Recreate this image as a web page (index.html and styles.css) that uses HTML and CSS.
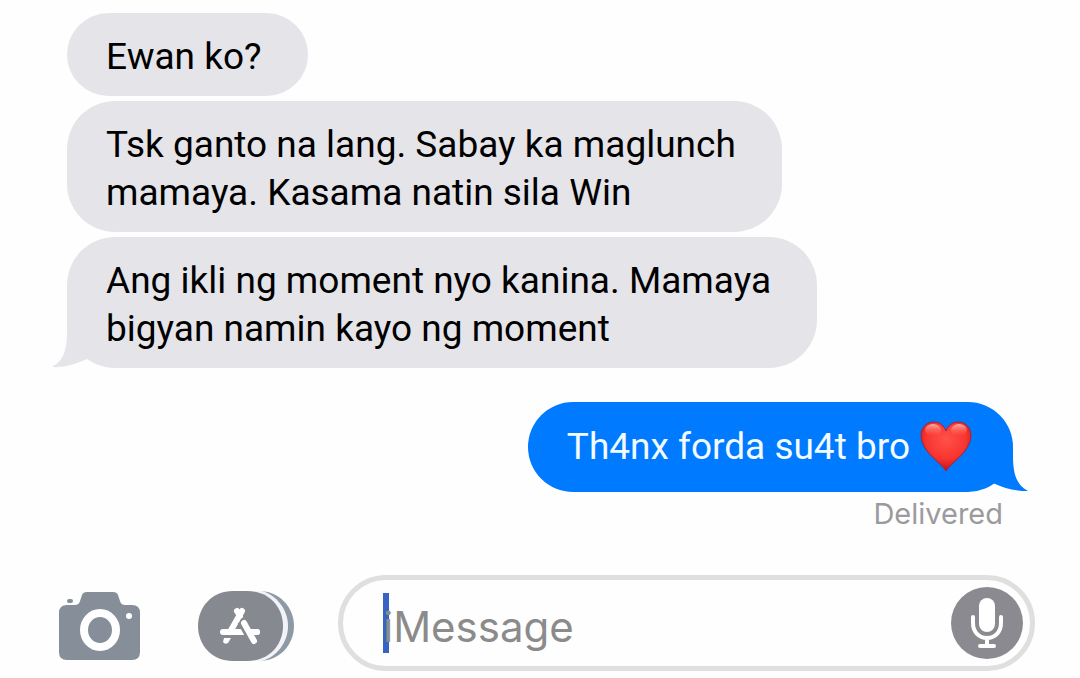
FILE: index.html
```
<!DOCTYPE html>
<html lang="fil">
<head>
  <meta charset="UTF-8" />
  <meta name="viewport" content="width=device-width, initial-scale=1.0" />
  <title>Messages</title>
  <link rel="stylesheet" href="styles.css">
</head>
<body>
  <main class="chat">
    <p class="bubble received">Ewan ko?</p>
    <p class="bubble received">Tsk ganto na lang. Sabay ka maglunch<br>mamaya. Kasama natin sila Win</p>
    <p class="bubble received">Ang ikli ng moment nyo kanina. Mamaya<br>bigyan namin kayo ng moment
      <svg class="tail tail-left" viewBox="0 0 62 56" aria-hidden="true"><path d="M15 8V20C15 39 11 49 0 55C12 56 23 52 35 47L36 30Z"/></svg>
    </p>
    <p class="bubble sent">Th4nx forda su4t bro
      <svg class="heart" viewBox="0 0 52 52" role="img" aria-label="red heart">
        <defs>
          <radialGradient id="heart-fill" cx="50%" cy="35%" r="62%">
            <stop offset="0" stop-color="#ff5148"/>
            <stop offset="0.65" stop-color="#f83530"/>
            <stop offset="1" stop-color="#c9141d"/>
          </radialGradient>
          <linearGradient id="heart-shine" x1="0" y1="0" x2="0" y2="1">
            <stop offset="0" stop-color="#ffb7b0" stop-opacity="0.9"/>
            <stop offset="1" stop-color="#ff6a62" stop-opacity="0"/>
          </linearGradient>
        </defs>
        <path d="M26 50C22 42 2 32 1 15C1 6 7 1 14 1C20 1 24 5 26 10C28 5 32 1 38 1C45 1 51 6 51 15C50 32 30 42 26 50Z" fill="url(#heart-fill)" stroke="#a5222d"/>
        <ellipse cx="13" cy="9" rx="8" ry="6" fill="url(#heart-shine)"/>
        <ellipse cx="39" cy="9" rx="8" ry="6" fill="url(#heart-shine)"/>
      </svg>
      <svg class="tail tail-right" viewBox="0 0 62 56" aria-hidden="true"><path d="M47 11V20C47 39 51 49 62 55C51 55 39 53 27 47L26 30Z"/></svg>
    </p>
    <p class="status">Delivered</p>
  </main>

  <form class="composer">
    <button class="icon-btn" type="button" aria-label="Camera">
      <svg width="82" height="70" viewBox="0 0 82 70">
        <path fill="#858e99" d="M8 14H16Q20 14 21 10L23 4Q24 1 28 1H54Q58 1 59 4L61 10Q62 14 66 14H73Q81 14 81 22V61Q81 69 73 69H8Q0 69 0 61V22Q0 14 8 14Z"/>
        <rect x="8" y="8" width="6" height="4" rx="2" fill="#858e99"/>
        <ellipse cx="41" cy="39" rx="16" ry="17" fill="none" stroke="#fff" stroke-width="8"/>
        <circle cx="70" cy="25" r="3" fill="#fff"/>
      </svg>
    </button>
    <button class="icon-btn" type="button" aria-label="Apps">
      <svg width="98" height="72" viewBox="0 0 98 72">
        <path fill="#8e99a6" d="M62 1C82 1 97 17 97 36S82 71 62 71Z"/>
        <path fill="#f1f3f9" d="M56 1H65C79 5 91 19 91 36S79 67 65 71H56Z"/>
        <path fill="#868990" d="M36 1H50C72 1 86 17 86 36S72 71 50 71H36C15 71 1 55 1 36S15 1 36 1Z"/>
        <g fill="none" stroke="#fff" stroke-width="6" stroke-linecap="round">
          <path d="M45 21L33 42M40 21L43 26"/>
          <path d="M26 42H60"/>
        </g>
        <path d="M45 31L57 52" fill="none" stroke="#868990" stroke-width="10"/>
        <path d="M47 33L57 51M54 42H60" fill="none" stroke="#fff" stroke-width="6" stroke-linecap="round"/>
        <path fill="#fff" d="M27 48H34L31 53Q28 55 26 52Z"/>
      </svg>
    </button>
    <div class="field">
      <span class="caret"></span>
      <input class="field-input" type="text" placeholder="iMessage" aria-label="iMessage">
      <button class="mic" type="button" aria-label="Dictate">
        <svg width="72" height="72" viewBox="0 0 72 72">
          <rect x="28" y="11" width="16" height="34" rx="8" fill="#fff"/>
          <path d="M22 30V36C22 45 28 51 36 51S50 45 50 36V30M36 51V59M29 59H43" fill="none" stroke="#fff" stroke-width="4" stroke-linecap="round"/>
        </svg>
      </button>
    </div>
  </form>
</body>
</html>
```
FILE: styles.css
```
* { box-sizing: border-box; }
body {
  margin: 0;
  background: #fefefe;
  font-family: Roboto, "Liberation Sans", sans-serif;
}
.chat {
  display: flex; flex-direction: column; align-items: flex-start;
  gap: 5px;
  padding: 13px 67px 0;
}
.bubble {
  position: relative;
  margin: 0;
  padding: 20px 46px 15px 39px;
  border-radius: 48px;
  font-size: 37px; line-height: 48px;
}
.received { background: #e5e4e9; color: #000; }
.sent {
  display: flex; align-items: center; gap: 10px;
  align-self: flex-end;
  margin-top: 29px;
  padding: 19px 41px 19px 39px;
  background: #007aff; color: #f2fbff;
}
.heart { width: 52px; height: 52px; }
.tail { position: absolute; bottom: 0; width: 62px; height: 56px; }
.tail-left { left: -15px; fill: #e5e4e9; }
.tail-right { right: -15px; fill: #007aff; }
.status {
  align-self: flex-end;
  margin: 0 10px 0 0;
  color: #9b9b9d;
  font: 29px/34px Inter, "Liberation Sans", sans-serif;
}
.composer {
  display: flex; align-items: center;
  padding: 44px 45px 7px 59px;
}
button { display: flex; padding: 0; border: 0; background: none; cursor: pointer; }
.icon-btn { padding-top: 6px; }
.icon-btn:first-child { margin-right: 56px; }
.field {
  position: relative;
  flex: 1; min-width: 0;
  display: flex; align-items: center;
  height: 96px;
  margin-left: 43px; padding: 0 7px 0 40px;
  border: 5px solid #dfdfdf; border-radius: 48px;
}
.field-input {
  position: relative;
  flex: 1; min-width: 0;
  padding: 8px 0 0; border: 0; outline: 0;
  background: transparent;
  font: 42px/56px Inter, "Liberation Sans", sans-serif;
}
.field-input::placeholder { color: #8b8b8b; opacity: 1; }
.caret {
  position: absolute; left: 40px; top: 13px;
  width: 6px; height: 60px;
  background: #3763c4;
}
.mic { border-radius: 50%; background: #8b8a90; }
```
